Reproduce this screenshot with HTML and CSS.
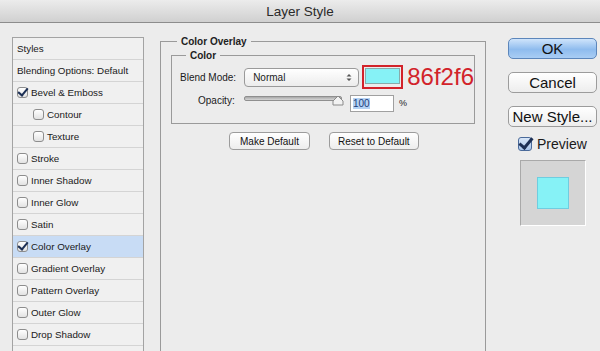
FILE: index.html
```
<!DOCTYPE html>
<html lang="en">
<head>
    <meta charset="UTF-8">
    <title>Layer Style</title>
    <link rel="stylesheet" href="styles.css">
</head>
<body>
    <div class="dialog">
        <div class="titlebar">Layer Style</div>
        <div class="content">
            <ul class="styles-list">
                <li class="item">Styles</li>
                <li class="item">Blending Options: Default</li>
                <li class="item"><span class="box checked"></span>Bevel &amp; Emboss</li>
                <li class="item sub"><span class="box"></span>Contour</li>
                <li class="item sub"><span class="box"></span>Texture</li>
                <li class="item"><span class="box"></span>Stroke</li>
                <li class="item"><span class="box"></span>Inner Shadow</li>
                <li class="item"><span class="box"></span>Inner Glow</li>
                <li class="item"><span class="box"></span>Satin</li>
                <li class="item active"><span class="box checked"></span>Color Overlay</li>
                <li class="item"><span class="box"></span>Gradient Overlay</li>
                <li class="item"><span class="box"></span>Pattern Overlay</li>
                <li class="item"><span class="box"></span>Outer Glow</li>
                <li class="item"><span class="box"></span>Drop Shadow</li>
            </ul>

            <fieldset class="group">
                <legend>Color Overlay</legend>
                <fieldset class="group inner">
                    <legend>Color</legend>
                    <div class="row">
                        <label class="lbl">Blend Mode:</label>
                        <div class="select">
                            <span>Normal</span>
                            <svg width="6" height="9" viewBox="0 0 6 9"><path d="M0.5 3.5 L3 1 L5.5 3.5 Z M0.5 5.5 L3 8 L5.5 5.5 Z" fill="#555"/></svg>
                        </div>
                        <div class="swatch-frame"><div class="swatch"></div></div>
                        <span class="hex">86f2f6</span>
                    </div>
                    <div class="row opacity">
                        <label class="lbl lbl-opacity">Opacity:</label>
                        <div class="slider">
                            <div class="track"></div>
                            <svg class="knob" width="12" height="11" viewBox="0 0 12 11"><path d="M1 10 L1 6 L6 1 L11 6 L11 10 Z" fill="#f2f2f2" stroke="#8a8a8a"/></svg>
                        </div>
                        <div class="num"><span class="sel">100</span></div>
                        <span class="pct">%</span>
                    </div>
                </fieldset>
                <div class="defaults">
                    <button class="btn small">Make Default</button>
                    <button class="btn small">Reset to Default</button>
                </div>
            </fieldset>

            <div class="actions">
                <button class="btn big primary">OK</button>
                <button class="btn big">Cancel</button>
                <button class="btn big">New Style...</button>
                <div class="preview-check"><span class="box big-box checked"></span>Preview</div>
                <div class="preview"><div class="preview-swatch"></div></div>
            </div>
        </div>
    </div>
</body>
</html>
```

FILE: styles.css
```
body {
    margin: 0;
    font-family: "Liberation Sans", Arial, sans-serif;
    background: #ececec;
    color: #1a1a1a;
}
.dialog {
    width: 600px;
    height: 351px;
    overflow: hidden;
    background: #ececec;
}
.titlebar {
    height: 22px;
    line-height: 23px;
    text-align: center;
    font-size: 13.5px;
    color: #2a2a2a;
    background: linear-gradient(#ececec, #d0d0d0);
    border-bottom: 1px solid #8c8c8c;
}
.content {
    display: flex;
    align-items: flex-start;
    padding-top: 13px;
}
.styles-list {
    list-style: none;
    margin: 1px 0 0 12px;
    padding: 0;
    width: 130px;
    border: 1px solid #a3a3a3;
    border-bottom: none;
    background: #f0f0f0;
    height: 320px;
}
.item {
    height: 21px;
    line-height: 21px;
    border-bottom: 1px solid #d4d4d4;
    font-size: 9.8px;
    padding-left: 4px;
    display: flex;
    align-items: center;
    white-space: nowrap;
}
.item.sub {
    padding-left: 20px;
}
.item.active {
    background: #c8dcf5;
}
.box {
    width: 9px;
    height: 9px;
    border: 1px solid #8d8d8d;
    border-radius: 3px;
    background: linear-gradient(#ffffff, #e2e2e2);
    margin-right: 3px;
    position: relative;
    flex-shrink: 0;
}
.box.checked::after {
    content: "";
    position: absolute;
    left: 2px;
    top: -2px;
    width: 4px;
    height: 8px;
    border: solid #1c2f55;
    border-width: 0 2px 2px 0;
    transform: rotate(40deg);
}
.group {
    margin: 0;
    border: 1px solid #9a9a9a;
    padding: 0;
    min-width: 0;
}
.content > .group {
    margin-left: 16px;
    margin-top: 0;
    width: 324px;
    height: 330px;
    border-bottom: none;
}
.group legend {
    font-size: 10px;
    font-weight: bold;
    margin-left: 16px;
    padding: 0 4px;
    color: #222;
}
.group.inner {
    margin: 3px 10px 0 10px;
    padding: 5px 0 10px 0;
    height: auto;
}
.group.inner legend {
    margin-left: 14px;
}
.row {
    display: flex;
    align-items: center;
    height: 22px;
}
.lbl {
    font-size: 10px;
    width: 66px;
    padding-left: 8px;
}
.lbl-opacity {
    padding-left: 26px;
    width: 46px;
}
.select {
    width: 102px;
    height: 17px;
    border: 1px solid #9a9a9a;
    border-radius: 4px;
    background: linear-gradient(#ffffff, #ececec);
    display: flex;
    align-items: center;
    justify-content: space-between;
    padding: 0 6px 0 8px;
    font-size: 10px;
}
.swatch-frame {
    margin-left: 3px;
    width: 36px;
    height: 18px;
    border: 2px solid #d2232a;
    padding: 1px;
    background: #ececec;
}
.swatch {
    height: 16px;
    background: #86f2f6;
    border: 1px solid #8aa;
    box-sizing: border-box;
}
.hex {
    color: #d2232a;
    font-size: 24px;
    margin-left: 4px;
    line-height: 22px;
}
.opacity {
    margin-top: 7px;
    align-items: flex-start;
    height: 18px;
}
.slider {
    position: relative;
    width: 103px;
    height: 16px;
}
.track {
    margin-top: 1px;
    width: 96px;
    height: 3px;
    border-radius: 2px;
    border: 1px solid #8f8f8f;
    background: linear-gradient(#a8a8a8, #d6d6d6);
}
.knob {
    position: absolute;
    left: 88px;
    top: 0;
}
.num {
    margin-left: 3px;
    width: 40px;
    height: 15px;
    border: 1px solid #a0a0a0;
    background: #fff;
    font-size: 10px;
    line-height: 15px;
    padding-left: 2px;
}
.sel {
    background: #b4d2f3;
    color: #1d3d7a;
}
.pct {
    font-size: 9px;
    margin-left: 5px;
    line-height: 17px;
}
.defaults {
    display: flex;
    gap: 19px;
    margin: 8px 0 0 68px;
}
.btn {
    font-family: "Liberation Sans", Arial, sans-serif;
    background: linear-gradient(#ffffff, #ededed);
    border: 1px solid #9c9c9c;
    border-radius: 4px;
    color: #111;
    padding: 0;
}
.btn.small {
    height: 18px;
    font-size: 10px;
    padding: 0 10px;
}
.btn.small + .btn.small {
    padding: 0 8px;
}
.actions {
    margin-left: 22px;
    margin-top: 2px;
    width: 89px;
    display: flex;
    flex-direction: column;
}
.btn.big {
    height: 21px;
    font-size: 15px;
    margin-bottom: 13px;
    border-radius: 5px;
}
.btn.primary {
    background: linear-gradient(#cfe4fb, #8fbcee 55%, #a9cdf4);
    border-color: #5c86bb;
}
.preview-check {
    display: flex;
    align-items: center;
    font-size: 14px;
    margin: -4px 0 0 10px;
}
.box.big-box {
    width: 12px;
    height: 12px;
    margin-right: 5px;
    background: linear-gradient(#d8e6f8, #a8c4ea);
    border-color: #4a6a9a;
}
.box.big-box.checked::after {
    left: 3px;
    top: -3px;
    width: 5px;
    height: 11px;
    border-width: 0 3px 3px 0;
}
.preview {
    margin: 8px 0 0 12px;
    width: 64px;
    height: 64px;
    background: #d5d5d5;
    border: 1px solid #a9a9a9;
    border-right-color: #fff;
    border-bottom-color: #fff;
    display: flex;
    align-items: center;
    justify-content: center;
}
.preview-swatch {
    width: 30px;
    height: 30px;
    background: #86f2f6;
    border: 1px solid #6fcde0;
}
```
